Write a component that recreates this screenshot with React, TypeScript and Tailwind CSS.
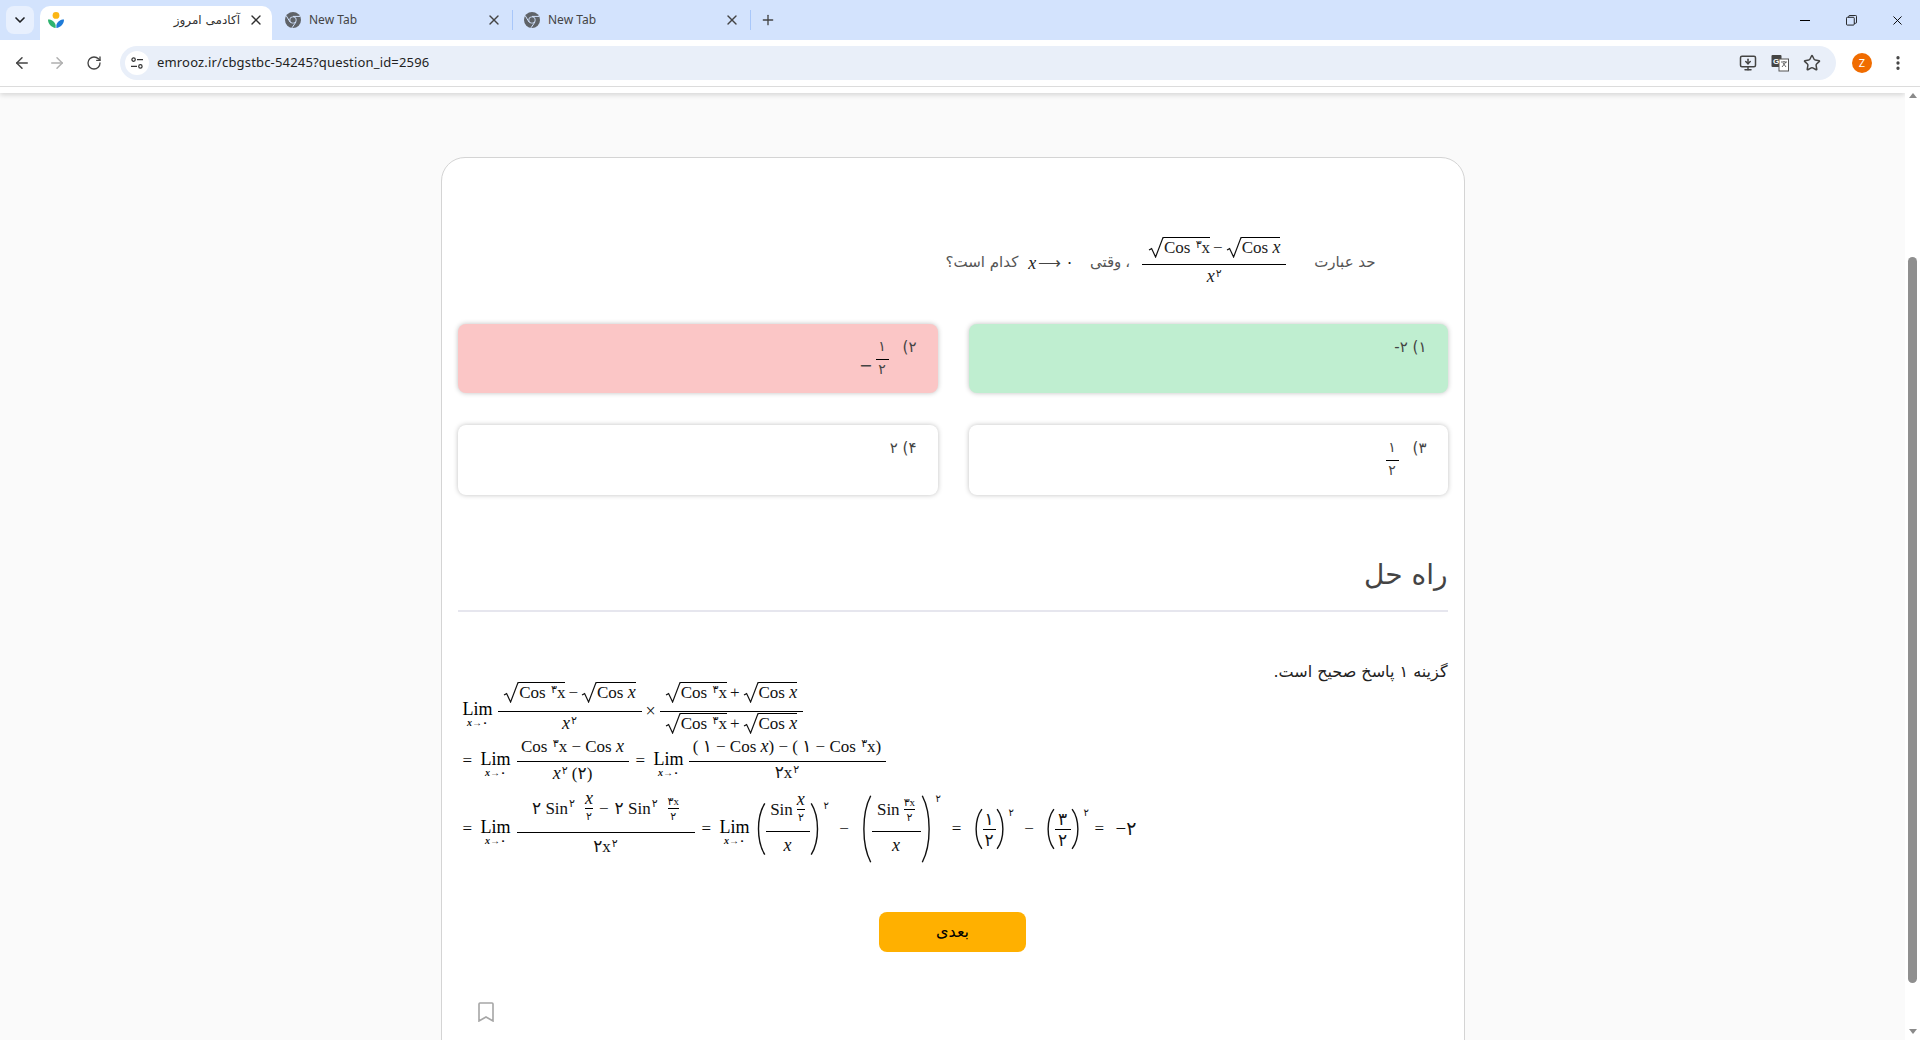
import React from 'react';
import { ArrowLeft, ArrowRight, ChevronDown, MonitorDown, MoreVertical, Plus, RotateCw, Star, X } from 'lucide-react';

const mathFont = 'font-["Liberation_Serif","DejaVu_Sans",serif]';

function ChromeIcon() {
    return (
        <svg viewBox="0 0 16 16" className="w-4 h-4 shrink-0">
            <circle cx="8" cy="8" r="8" fill="#5f6368" />
            <circle cx="8" cy="8" r="3.6" fill="#d3e3fd" />
            <circle cx="8" cy="8" r="2.7" fill="#5f6368" />
            <path d="M8 4.4h7M5 10l-3.6-6M10.8 10.2 7 15.8" stroke="#d3e3fd" strokeWidth="1" fill="none" />
        </svg>
    );
}

function Favicon() {
    return (
        <svg viewBox="0 0 16 16" className="w-4 h-4 shrink-0">
            <circle cx="8" cy="3.4" r="3.4" fill="#fbb615" />
            <path d="M0 7.5c3.5 0 6.8 2 7.6 5.5V16C3.5 15.5 0 12 0 7.5z" fill="#2fb36f" />
            <path d="M16 7.5c-3.5 0-6.8 2-7.6 5.5V16c4.1-.5 7.6-4 7.6-8.5z" fill="#1f7bd8" />
        </svg>
    );
}

function ActiveTab({ title }: { title: string }) {
    return (
        <div className="w-[232px] h-[34px] bg-white rounded-t-[10px] flex items-center px-2 pb-[6px] ml-1.5">
            <Favicon />
            <span dir="rtl" className="flex-1 pr-2 text-[12px] text-[#303030] font-['DejaVu_Sans',sans-serif] tracking-[-0.5px]">{title}</span>
            <X className="w-4 h-4 text-[#303030]" strokeWidth={2} />
        </div>
    );
}

function Tab({ title, width, pad }: { title: string; width: string; pad: string }) {
    return (
        <div className={`${width} ${pad} h-[34px] flex items-center pb-[6px]`}>
            <ChromeIcon />
            <span className="flex-1 text-[12px] text-[#444] pl-2 font-['Noto_Sans',sans-serif]">{title}</span>
            <X className="w-4 h-4 text-[#444] mr-[10px]" strokeWidth={2} />
            <span className="w-px h-5 bg-[#a8c7fa]" />
        </div>
    );
}

function TopChrome() {
    return (
        <div className="shrink-0">
            <div className="h-10 bg-[#d3e3fd] flex items-end relative">
                <div className="self-start mt-1.5 ml-1.5 w-7 h-7 rounded-lg bg-[#e8f0fe] flex items-center justify-center">
                    <ChevronDown className="w-4 h-4 text-[#202124]" strokeWidth={2.5} />
                </div>
                <ActiveTab title="آکادمی امروز" />
                <Tab title="New Tab" width="w-[241px]" pad="pl-[13px]" />
                <Tab title="New Tab" width="w-[238px]" pad="pl-[11px]" />
                <Plus className="w-4 h-4 text-[#444] self-start mt-3 ml-[9px]" strokeWidth={2} />
                <div className="ml-auto self-start flex items-center text-[#1f1f1f] h-10">
                    <span className="w-[46px] flex justify-center"><span className="w-[10px] h-px bg-black" /></span>
                    <span className="w-[46px] flex justify-center">
                        <svg viewBox="0 0 12 12" className="w-[11px] h-[11px]" fill="none" stroke="#111">
                            <rect x="0.5" y="2.5" width="8.5" height="8.5" rx="1" />
                            <path d="M3 2.5V1.5a1 1 0 0 1 1-1h6.5a1 1 0 0 1 1 1V8a1 1 0 0 1-1 1H9" />
                        </svg>
                    </span>
                    <span className="w-[46px] flex justify-center">
                        <X className="w-[15px] h-[15px] text-black" strokeWidth={1.5} />
                    </span>
                </div>
            </div>
            <div className="h-[46px] bg-white rounded-t-lg flex items-center">
                <div className="flex items-center gap-[17px] pl-[13px] w-[120px] text-[#444]">
                    <ArrowLeft className="w-[18px] h-[18px]" strokeWidth={2} />
                    <ArrowRight className="w-[18px] h-[18px] text-[#b0b0b0]" strokeWidth={2} />
                    <RotateCw className="w-4 h-4 ml-[3px]" strokeWidth={2} />
                </div>
                <div className="w-[1716px] h-[34px] bg-[#e9eff9] rounded-full flex items-center pl-[5px] pr-2">
                    <div className="w-6 h-6 rounded-full bg-white flex items-center justify-center">
                        <svg viewBox="0 0 14 14" className="w-[14px] h-[14px]" fill="none" stroke="#333" strokeWidth="1.2">
                            <circle cx="3.6" cy="3.6" r="1.7" />
                            <circle cx="10.4" cy="10.4" r="1.7" />
                            <path d="M7 3.6h6M1 10.4h6" />
                        </svg>
                    </div>
                    <span className="ml-[8px] text-[13px] text-[#222] font-['Noto_Sans',sans-serif] tracking-[0.17px]">emrooz.ir/cbgstbc-54245?question_id=2596</span>
                    <div className="ml-auto flex items-center gap-[14px] pr-[7px]">
                        <MonitorDown className="w-[18px] h-[18px] text-[#444]" strokeWidth={2} />
                        <svg viewBox="0 0 18 18" className="w-[18px] h-[18px]">
                            <rect x="0.5" y="1" width="10" height="12" rx="1" fill="#444" />
                            <rect x="8" y="5" width="9.5" height="12" fill="#fff" stroke="#555" />
                            <text x="2" y="10" fontSize="8" fontWeight="700" fill="#fff" fontFamily="Liberation Sans">G</text>
                            <path d="M10 8h6M13 7v1M11 13l4-5M12 9l3 4" stroke="#555" strokeWidth="0.9" fill="none" />
                        </svg>
                        <Star className="w-[18px] h-[18px] text-[#444]" strokeWidth={2} />
                    </div>
                </div>
                <div className="flex-1 flex items-center pl-4 pr-[13px] justify-between">
                    <div className="w-5 h-5 rounded-full bg-[#f06c00] text-white text-[11px] flex items-center justify-center font-['Noto_Sans',sans-serif]">Z</div>
                    <MoreVertical className="w-[18px] h-[18px] text-[#444]" strokeWidth={2.4} />
                </div>
            </div>
            <div className="h-px bg-[#dcdcdc]" />
        </div>
    );
}

function Frac({ num, den, numH, denH, minW, small }: { num: React.ReactNode; den: React.ReactNode; numH: string; denH: string; minW?: string; small?: boolean }) {
    return (
        <span className={`inline-flex flex-col items-center ${minW ?? ''} ${small ? 'text-[11px]' : ''}`}>
            <span className={`${numH} flex items-end justify-center leading-none whitespace-nowrap pb-[1px] w-full`}>{num}</span>
            <span className="w-full h-px bg-black" />
            <span className={`${denH} flex items-start justify-center leading-none whitespace-nowrap pt-[2px] w-full`}>{den}</span>
        </span>
    );
}

function Sqrt({ children }: { children: React.ReactNode }) {
    return (
        <span className="inline-flex items-stretch">
            <svg viewBox="0 0 16 21" preserveAspectRatio="none" className="w-[16px] h-[21px] shrink-0" fill="none" stroke="#111" strokeWidth="1.2">
                <path d="M1 13l2.6-1.4L7.6 20 15 .6h1" />
            </svg>
            <span className="border-t border-black leading-[20px] whitespace-nowrap">{children}</span>
        </span>
    );
}

function Sup({ children }: { children: React.ReactNode }) {
    return <sup className="text-[11px] relative -top-[5px] align-baseline ml-[1px]">{children}</sup>;
}

function Lim() {
    return (
        <span className="inline-flex flex-col items-center leading-none w-[30px]">
            <span className="text-[18px] leading-[17px] mt-[7px] text-black">Lim</span>
            <span className="text-[10px] font-bold leading-[10px] whitespace-nowrap"><i>x</i>→۰</span>
        </span>
    );
}

function I({ children }: { children: React.ReactNode }) {
    return <i className="text-[18px] leading-none">{children}</i>;
}

function RootPair({ op }: { op: string }) {
    return (
        <span className="inline-flex items-center text-[17px]">
            <Sqrt>Cos <Sup>۳</Sup>x</Sqrt>
            <span className="mx-[3px]">{op}</span>
            <Sqrt>Cos <I>x</I></Sqrt>
        </span>
    );
}

function Paren({ h, w, children }: { h: string; w: string; children: React.ReactNode }) {
    return (
        <span className="inline-flex items-center">
            <svg viewBox="0 0 10 40" preserveAspectRatio="none" className={`${h} ${w}`} fill="none" stroke="#111" strokeWidth="1.4">
                <path d="M9 1C2 11 2 29 9 39" vectorEffect="non-scaling-stroke" />
            </svg>
            {children}
            <svg viewBox="0 0 10 40" preserveAspectRatio="none" className={`${h} ${w}`} fill="none" stroke="#111" strokeWidth="1.4">
                <path d="M1 1C8 11 8 29 1 39" vectorEffect="non-scaling-stroke" />
            </svg>
            <span className="text-[10px] self-start leading-none ml-[2px] w-[6px]">۲</span>
        </span>
    );
}

function SinFrac({ num, width }: { num: React.ReactNode; width: string }) {
    return (
        <Frac
            minW={width}
            numH="h-[30px]"
            denH="h-[26px]"
            num={
                <span className="inline-flex items-center mb-[8px]">
                    Sin
                    <span className="w-[4px]" />
                    <Frac small numH="h-[12px]" denH="h-[12px]" num={num} den="۲" />
                </span>
            }
            den={<span className="mt-[2px]"><I>x</I></span>}
        />
    );
}

function Solution() {
    return (
        <div dir="ltr" className={`${mathFont} text-[17px] text-[#111] pl-[5px]`}>
            <div className="h-[52px] flex items-center">
                <Lim />
                <span className="w-[5px]" />
                <Frac
                    minW="w-[144px]"
                    numH="h-[26px]"
                    denH="h-[25px]"
                    num={<span className="mb-[4px]"><RootPair op="−" /></span>}
                    den={<span><I>x</I><Sup>۲</Sup></span>}
                />
                <span className="mx-[4px] w-[10px] text-center text-[18px]">×</span>
                <Frac
                    minW="w-[143px]"
                    numH="h-[26px]"
                    denH="h-[25px]"
                    num={<span className="mb-[4px]"><RootPair op="+" /></span>}
                    den={<span className="-mt-[1px]"><RootPair op="+" /></span>}
                />
            </div>
            <div className="h-[48px] flex items-center">
                <span className="w-[18px]">=</span>
                <Lim />
                <span className="w-[6px]" />
                <Frac
                    minW="w-[112px]"
                    numH="h-[24px]"
                    denH="h-[23px]"
                    num={<span className="mb-[5px]">Cos <Sup>۳</Sup>x − Cos <I>x</I></span>}
                    den={<span><I>x</I><Sup>۲</Sup> (۲)</span>}
                />
                <span className="ml-[7px] w-[18px]">=</span>
                <Lim />
                <span className="w-[5px]" />
                <Frac
                    minW="w-[197px]"
                    numH="h-[24px]"
                    denH="h-[23px]"
                    num={<span className="mb-[5px]">( ۱ − Cos <I>x</I>) − ( ۱ − Cos <Sup>۳</Sup>x)</span>}
                    den={<span>۲x<Sup>۲</Sup></span>}
                />
            </div>
            <div className="h-[88px] flex items-center">
                <span className="w-[18px]">=</span>
                <Lim />
                <span className="w-[6px]" />
                <Frac
                    minW="w-[178px]"
                    numH="h-[36px]"
                    denH="h-[30px]"
                    num={
                        <span className="inline-flex items-center mb-[10px]">
                            ۲ Sin <Sup>۲</Sup>
                            <span className="w-[10px]" />
                            <Frac small numH="h-[12px]" denH="h-[12px]" num={<I>x</I>} den="۲" />
                            <span className="mx-[6px]">−</span>
                            ۲ Sin <Sup>۲</Sup>
                            <span className="w-[10px]" />
                            <Frac small numH="h-[12px]" denH="h-[12px]" num={<span>۳x</span>} den="۲" />
                        </span>
                    }
                    den={<span className="mt-[3px]">۲x<Sup>۲</Sup></span>}
                />
                <span className="ml-[7px] w-[18px]">=</span>
                <Lim />
                <span className="w-[4px]" />
                <Paren h="h-[54px]" w="w-[12px]">
                    <SinFrac width="w-[44px]" num={<I>x</I>} />
                </Paren>
                <span className="mx-[9px] w-[11px] text-center">−</span>
                <Paren h="h-[70px]" w="w-[13px]">
                    <SinFrac width="w-[49px]" num={<span>۳x</span>} />
                </Paren>
                <span className="mx-[9px] w-[12px] text-center">=</span>
                <Paren h="h-[42px]" w="w-[11px]">
                    <Frac minW="w-[13px]" numH="h-[20px]" denH="h-[20px]" num="۱" den="۲" />
                </Paren>
                <span className="mx-[9px] w-[11px] text-center">−</span>
                <Paren h="h-[42px]" w="w-[11px]">
                    <Frac minW="w-[16px]" numH="h-[20px]" denH="h-[20px]" num="۳" den="۲" />
                </Paren>
                <span className="ml-[5px] w-[18px]">=</span>
                <span className="ml-[3px] text-[19px]">−۲</span>
            </div>
        </div>
    );
}

function Option({ color, label, height, children }: { color: string; label: string; height: string; children?: React.ReactNode }) {
    return (
        <div className={`${color} ${height} rounded-lg shadow-[0_0_5px_rgba(0,0,0,0.25)] pr-[21px] pt-[9px] flex items-start text-[15px] text-[#444] font-['DejaVu_Sans',sans-serif]`}>
            <span className="leading-[28px] whitespace-nowrap">{label}</span>
            {children}
        </div>
    );
}

function OptionFrac({ num, minus }: { num: string; minus?: boolean }) {
    return (
        <span dir="ltr" className="inline-flex items-end mr-[14px] text-[14px]">
            {minus && <span className="mr-[3px] mb-[2px] text-[16px] leading-[20px] w-[14px] text-center">−</span>}
            <Frac
                minW="w-[13px]"
                numH="h-[26px]"
                denH="h-[18px]"
                num={<span className="mb-[5px]">{num}</span>}
                den="۲"
            />
        </span>
    );
}

function QuestionRow() {
    return (
        <div dir="rtl" className="mt-[76px] h-[60px] flex items-center pr-[72px] text-[15px] text-[#555] font-['DejaVu_Sans',sans-serif]">
            <span className="mb-[3px]">حد عبارت</span>
            <span className="w-7" />
            <span dir="ltr" className={`${mathFont} inline-flex text-[#222]`}>
                <Frac
                    minW="w-[144px]"
                    numH="h-[30px]"
                    denH="h-[29px]"
                    num={<span className="mb-[2px]"><RootPair op="−" /></span>}
                    den={<span><I>x</I><Sup>۲</Sup></span>}
                />
            </span>
            <span className="mr-[12px] mb-[3px]">،</span>
            <span className="mr-[4px] mb-[3px]">وقتی</span>
            <span dir="ltr" className={`${mathFont} mr-[16px] mb-[3px] text-[#222] text-[16px] whitespace-nowrap inline-flex items-center gap-[2px]`}>
                <I>x</I>
                <span className="font-['DejaVu_Sans',sans-serif] font-light text-[#444]">⟶</span>
                <span className="ml-[2px]">۰</span>
            </span>
            <span className="mr-[10px] mb-[3px]">کدام است؟</span>
        </div>
    );
}

function Scrollbar() {
    return (
        <div className="w-[15px] shrink-0 bg-white flex flex-col items-center">
            <div className="h-[17px] flex items-center justify-center">
                <span className="w-0 h-0 border-x-[4.5px] border-x-transparent border-b-[5px] border-b-[#8a8a8a]" />
            </div>
            <div className="mt-[153px] h-[726px] w-[9px] rounded-full bg-[#8f8f8f]" />
            <div className="mt-auto h-[17px] flex items-center justify-center">
                <span className="w-0 h-0 border-x-[4.5px] border-x-transparent border-t-[5px] border-t-[#8a8a8a]" />
            </div>
        </div>
    );
}

export default function App() {
    return (
        <div className="h-screen overflow-hidden flex flex-col bg-white">
            <TopChrome />
            <div className="flex-1 flex min-h-0">
                <div className="flex-1 min-w-0 bg-[#fafafa] overflow-hidden">
                    <div className="h-[6px] bg-white shadow-[0_2px_5px_rgba(0,0,0,0.15)]" />
                    <div className="mt-[64px] mx-auto w-[1024px] h-[1000px] bg-white border border-[#d4d4d4] rounded-[24px] px-4">
                        <QuestionRow />
                        <div dir="rtl" className="mt-[30px] grid grid-cols-[479px_480px] gap-x-[31px] gap-y-[32px]">
                            <Option color="bg-[#bfeed0]" label="۱) ۲-" height="h-[69px]" />
                            <Option color="bg-[#fbc6c6]" label="۲)" height="h-[69px]"><OptionFrac num="۱" minus /></Option>
                            <Option color="bg-white" label="۳)" height="h-[70px]"><OptionFrac num="۱" /></Option>
                            <Option color="bg-white" label="۴) ۲" height="h-[70px]" />
                        </div>
                        <h2 dir="rtl" className="mt-[55px] h-[62px] border-b-2 border-[#e6e6ee] text-[28px] leading-[50px] text-[#444] font-['DejaVu_Sans',sans-serif]">راه حل</h2>
                        <p dir="rtl" className="mt-[48px] h-[25px] text-[16px] leading-[24px] text-[#222] font-['DejaVu_Sans',sans-serif]">گزینه ۱ پاسخ صحیح است.</p>
                        <Solution />
                        <div className="mt-[39px] flex justify-center">
                            <button className="w-[147px] h-10 bg-[#ffb000] rounded-lg text-[16px] text-black font-['DejaVu_Sans',sans-serif]">بعدی</button>
                        </div>
                        <div className="mt-[50px] pl-[20px]">
                            <svg viewBox="0 0 16 20" className="w-4 h-5" fill="none" stroke="#a6a6a6" strokeWidth="1.6">
                                <path d="M1 19V2a1 1 0 0 1 1-1h12a1 1 0 0 1 1 1v17l-7-4z" />
                            </svg>
                        </div>
                    </div>
                </div>
                <Scrollbar />
            </div>
        </div>
    );
}
